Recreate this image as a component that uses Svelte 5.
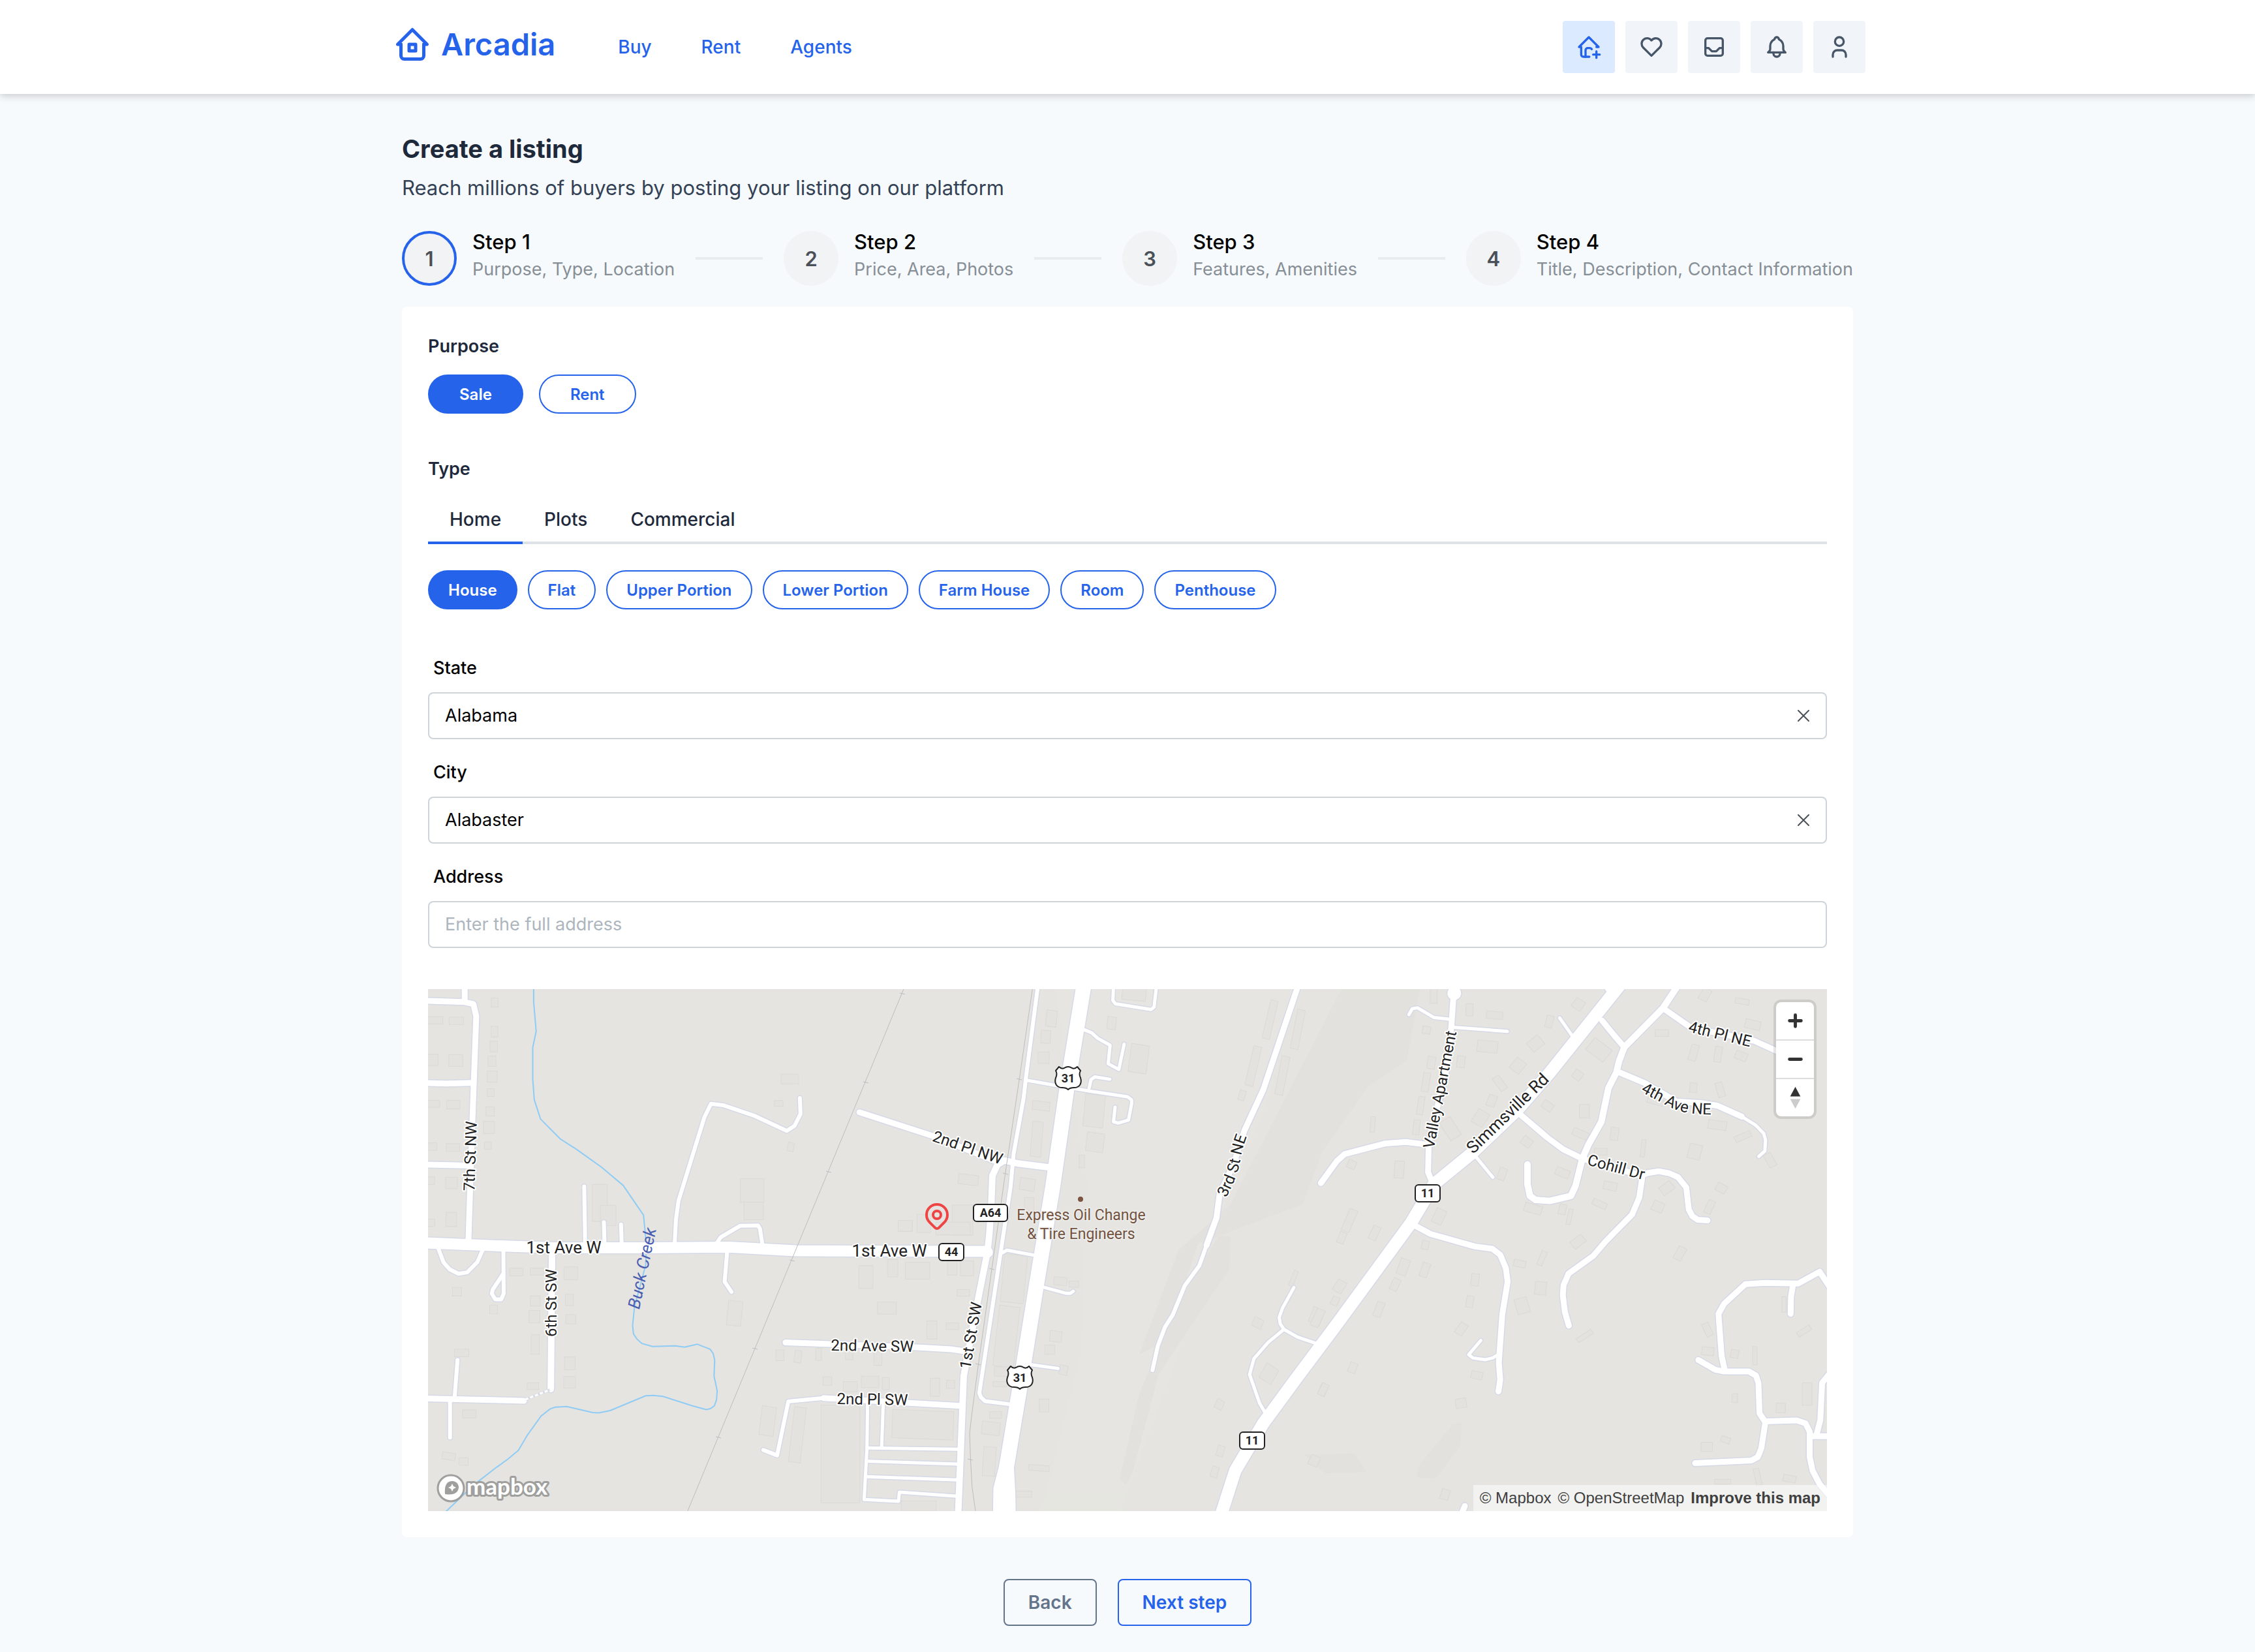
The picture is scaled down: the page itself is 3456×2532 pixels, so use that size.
<script lang="ts">
	const nav = ['Buy', 'Rent', 'Agents']

	const actions = [
		{
			label: 'Create listing',
			active: true,
			paths: [
				'M19 12h2l-9 -9l-9 9h2v7a2 2 0 0 0 2 2h5.5',
				'M16 19h6',
				'M19 16v6',
				'M9 21v-6a2 2 0 0 1 2 -2h2a2 2 0 0 1 1.700 1'
			]
		},
		{
			label: 'Favourites',
			paths: ['M19.500 12.572l-7.500 7.428l-7.500 -7.428a5 5 0 1 1 7.500 -6.566a5 5 0 1 1 7.500 6.572']
		},
		{
			label: 'Inbox',
			paths: [
				'M4 6a2 2 0 0 1 2 -2h12a2 2 0 0 1 2 2v12a2 2 0 0 1 -2 2h-12a2 2 0 0 1 -2 -2z',
				'M4 13h3l3 3h4l3 -3h3'
			]
		},
		{
			label: 'Notifications',
			paths: [
				'M10 5a2 2 0 1 1 4 0a7 7 0 0 1 4 6v3a4 4 0 0 0 2 3h-16a4 4 0 0 0 2 -3v-3a7 7 0 0 1 4 -6',
				'M9 17v1a3 3 0 0 0 6 0v-1'
			]
		},
		{
			label: 'Profile',
			paths: [
				'M8 7a4 4 0 1 0 8 0a4 4 0 0 0 -8 0',
				'M6 21v-2a4 4 0 0 1 4 -4h4a4 4 0 0 1 4 4v2'
			]
		}
	]

	const steps = [
		'Purpose, Type, Location',
		'Price, Area, Photos',
		'Features, Amenities',
		'Title, Description, Contact Information'
	]

	const purposes = ['Sale', 'Rent']
	const tabs = ['Home', 'Plots', 'Commercial']
	const types = ['House', 'Flat', 'Upper Portion', 'Lower Portion', 'Farm House', 'Room', 'Penthouse']

	let step = $state(1)
	let purpose = $state('Sale')
	let tab = $state('Home')
	let type = $state('House')
	let region = $state('Alabama')
	let city = $state('Alabaster')
	let address = $state('')

	// the map is cut in three tiles, each with its own grid
	const tiles = [
		{
			transform: 'translate(-6 -6) scale(.4783 .5166)',
			roads: [
				[9, 'M130 0V50 M0 46L130 50L158 56L167 92L154 420L142 760'],
				[9, 'M0 290L70 292L152 290 M0 532L148 535'],
				[10, 'M410 790L406 1198'],
				[9, 'M0 1226L320 1233'],
				[6, 'M98 1220L107 1112 M83 1233V1342'],
				[6, 'M45 780L62 822L82 843L110 856L138 852L170 822L188 785'],
				[6, 'M254 785L255 915L247 932H228L217 915L220 903L252 858'],
				[6, 'M513 597L516 765 M576 703L578 765 M631 710L633 765'],
				[6, 'M803 765L807 695L815 640L898 392L919 352L958 356L1060 388L1162 432L1187 417L1206 382L1204 335'],
				[6, 'M938 765L950 748L1012 714L1070 713L1076 722L1084 770 M971 790L963 880L985 910'],
				[6, 'M1087 1379L1131 1395L1167 1235L1280 1225'],
				[17, 'M-10 764L200 772L420 779H700L980 777L1190 788L1800 790']
			],
			buildings: [
				[215, 38, 22, 27], [0, 93, 60, 22], [80, 95, 46, 22], [214, 122, 22, 32], [211, 166, 24, 32],
				[0, 205, 45, 33], [79, 206, 45, 35], [205, 210, 25, 31], [202, 255, 32, 33], [202, 307, 23, 23],
				[0, 342, 50, 20], [72, 342, 43, 25], [198, 361, 27, 27], [190, 404, 36, 36], [193, 465, 22, 22],
				[0, 468, 41, 22], [71, 470, 43, 23], [0, 569, 34, 22], [69, 570, 38, 34], [0, 694, 34, 22],
				[70, 674, 34, 42], [1144, 264, 56, 29], [1122, 342, 28, 17], [1165, 467, 20, 26, 12],
				[1013, 574, 76, 70], [1025, 644, 62, 52], [1519, 698, 46, 33], [539, 591, 48, 110], [565, 653, 50, 60],
				[274, 840, 43, 22], [340, 840, 43, 20], [448, 836, 44, 38], [91, 897, 29, 25], [340, 922, 32, 30],
				[210, 949, 25, 26], [336, 965, 35, 37], [453, 917, 25, 34], [454, 977, 32, 28], [343, 1037, 26, 58],
				[97, 1080, 46, 22], [450, 1103, 34, 38], [447, 1161, 38, 34], [330, 1180, 37, 20], [123, 1260, 43, 24],
				[58, 1387, 42, 21, 8], [112, 1402, 29, 22], [972, 937, 46, 73, 6], [1393, 832, 45, 68],
				[1453, 940, 60, 36], [1485, 814, 33, 51], [1127, 1082, 26, 32], [1187, 1084, 22, 36, 8],
				[1255, 1077, 18, 36], [1350, 1085, 24, 26], [1441, 1088, 26, 40], [1278, 1162, 28, 25],
				[1343, 1176, 45, 30], [1401, 1160, 56, 34], [1468, 1164, 23, 36], [1078, 1250, 46, 86, 8],
				[1177, 1252, 38, 164, 7], [1272, 1246, 124, 290]
			]
		},
		{
			transform: 'translate(644 -6) scale(.4783 .5166)',
			roads: [
				[9, 'M-201 1060L210 1074L330 1080L372 1086'],
				[9, 'M-79 1225L170 1238L360 1248'],
				[5, 'M62 1240L60 1375L51 1526L161 1531L164 1504L350 1516 M112 1245L107 1372'],
				[5, 'M60 1373L350 1377 M58 1412L350 1421 M56 1458L350 1468'],
				[9, 'M36 377L280 450L480 525'],
				[10, 'M640 540L545 529L500 520L478 533L462 565L458 660L452 740L446 792L410 960L370 1160L352 1575'],
				[6, 'M608 0L570 270L562 335L530 500L520 600L420 1210L425 1222L438 1234L515 1243'],
				[5, 'M572 282L670 298L780 315L895 331L908 340V352L898 400L865 409L850 405L855 362'],
				[5, 'M772 305L778 280L790 272L838 279'],
				[5, 'M750 130L780 141L800 158L839 178L833 233L867 250L884 175'],
				[5, 'M850 0L848 45L856 55L970 72L980 65L988 0'],
				[5, 'M492 795L508 786L600 802 M622 895L697 914H712L721 908 M580 1125L672 1137'],
				[9, 'M1442 0L1330 310L1270 430L1235 530L1190 620L1180 690L1148 772'],
				[6, 'M1148 772L1125 832L1078 892L1040 978L1015 1014L992 1070L975 1142'],
				[5, 'M1428 897L1392 957L1381 985L1384 1004L1396 1021L1440 1044L1500 1063'],
				[5, 'M1396 1021L1345 1060L1300 1108L1286 1155L1318 1240L1338 1272'],
				[17, 'M445 792H446'],
				[23, 'M755 0L700 310L655 600L603 890L556 1160L507 1430L501 1580'],
				[23, 'M507 1430L489 1495L488 1580 M507 1430L511 1500L513 1580']
			],
			buildings: [
				[634, 75, 34, 48, 6], [618, 134, 30, 38, 4], [608, 198, 36, 34], [590, 345, 56, 26, 6],
				[587, 405, 34, 104, 5], [550, 573, 48, 36, 8], [565, 630, 30, 40], [353, 562, 64, 30, 6],
				[333, 652, 66, 90], [220, 680, 44, 54], [160, 698, 45, 32], [281, 703, 110, 38],
				[878, 5, 76, 40, 5], [830, 94, 28, 37, 6], [902, 176, 58, 84, 8], [756, 325, 64, 96, 6],
				[763, 438, 56, 56, 7], [740, 504, 17, 38], [183, 822, 78, 50], [318, 818, 30, 42], [359, 818, 43, 44],
				[494, 800, 74, 142, 6], [474, 952, 66, 180, 7], [349, 903, 40, 20], [252, 996, 32, 54], [314, 1002, 39, 20],
				[659, 866, 42, 24, 5], [708, 878, 31, 18], [646, 1026, 38, 32, 6], [630, 1068, 32, 27],
				[676, 1128, 27, 28, 12], [612, 1228, 31, 38], [468, 1132, 50, 28], [464, 1176, 44, 15],
				[453, 1265, 38, 20], [428, 1296, 58, 38, 6], [432, 1370, 40, 86, 4], [263, 1166, 30, 54],
				[315, 1172, 26, 24], [141, 1262, 196, 84, 2], [578, 1424, 66, 17, 4], [535, 1501, 53, 18],
				[170, 1530, 112, 30], [1340, 44, 24, 116, 14], [1285, 180, 26, 120, 14], [1428, 72, 25, 118, 12],
				[1378, 210, 26, 116, 12], [1252, 312, 20, 30, 18], [1482, 958, 38, 48, 24], [1296, 988, 32, 28, 24],
				[1326, 1128, 44, 50, 32], [1177, 1230, 25, 28, 26], [1182, 1366, 22, 32, 18], [1163, 1428, 22, 32, 18],
				[1510, 1182, 24, 36, 24], [1420, 846, 14, 48, 24]
			]
		},
		{
			transform: 'translate(1344 -6) scale(.5421 .5166)',
			roads: [
				[9, 'M422 0L414 120L400 250L350 465L348 555L358 580'],
				[20, 'M421 24H423'],
				[5, 'M410 101L365 96L318 67L303 70L294 87 M420 125L572 137'],
				[9, 'M45 587L90 522L112 501L225 470L285 465L345 473'],
				[5, 'M720 97L762 160 M480 505L531 570'],
				[10, 'M1055 0L1012 68L903 184L888 225L880 260L858 305L838 405L802 472L784 515L765 595L752 625L692 640L652 637L636 625L629 590V532'],
				[9, 'M840 105L875 150L903 184 M850 0L870 30'],
				[9, 'M1012 68L1090 125L1270 165L1340 198'],
				[9, 'M885 257L960 290L1050 345L1120 350L1165 357L1235 390'],
				[5, 'M1235 390L1275 416L1297 440L1302 460L1300 492L1283 508'],
				[9, 'M605 380L685 452L730 487L785 515L850 535L950 565L970 557L1000 552L1030 558L1055 570L1078 600L1085 665L1095 685L1110 696L1138 698'],
				[9, 'M955 560L945 630L925 680L850 760L815 803L745 856L731 890L729 920L735 970L746 1010'],
				[9, 'M300 707L355 738L480 775L530 782L552 800L568 840L573 880L558 975L548 1120L552 1170L547 1205'],
				[5, 'M497 1054L463 1096L475 1106L510 1111L530 1106L548 1095'],
				[9, 'M1485 898L1455 850L1395 885L1300 883L1245 887L1185 945L1169 975L1178 1100L1187 1143 M1380 887L1374 925L1373 975'],
				[9, 'M1112 1112L1160 1141L1185 1146H1255L1275 1158L1282 1180L1285 1270L1300 1294L1390 1291L1415 1300L1427 1325V1400L1435 1440L1455 1480L1495 1530'],
				[9, 'M1302 1294L1290 1375L1280 1400L1262 1410L1103 1418'],
				[9, 'M1430 1338H1490 M1446 1335L1457 1290L1462 1180L1485 1150 M452 1545L440 1575'],
				[19, 'M890 0L690 262L600 370L470 500L365 590L300 705L92 1003L-20 1160L-118 1300L-197 1440L-240 1580']
			],
			buildings: [
				[354, 8, 20, 46], [455, 55, 20, 36], [513, 78, 46, 22, 5], [332, 122, 23, 22, 10], [346, 212, 22, 36, 8],
				[430, 210, 22, 34, 6], [487, 165, 58, 34, 6], [332, 260, 20, 56, 8], [318, 330, 18, 54, 8],
				[306, 400, 18, 44, 6], [185, 390, 13, 46, 4], [253, 522, 27, 50, 4], [120, 520, 24, 24, 24],
				[393, 395, 36, 62, -32], [632, 156, 40, 34, -40], [585, 220, 34, 38, 38], [540, 268, 22, 46, -36],
				[516, 326, 24, 34, 20], [478, 372, 36, 44, 32], [758, 42, 30, 30, 36], [681, 90, 20, 36, 14],
				[800, 170, 62, 44, 38], [758, 254, 26, 26, 36], [776, 354, 28, 40], [756, 430, 46, 22, 24],
				[670, 346, 32, 24, 36], [612, 452, 30, 26, 38], [864, 422, 22, 38, 6], [818, 484, 36, 20],
				[708, 544, 40, 24, 22], [844, 584, 38, 24, 12], [620, 650, 50, 26, 16], [812, 640, 42, 18, 26],
				[742, 664, 12, 46, 12], [718, 650, 20, 30, 12], [546, 542, 22, 36, 20], [950, 458, 12, 52, 6],
				[990, 132, 38, 20], [1088, 176, 22, 48, 16], [1158, 182, 20, 46, 8], [1216, 198, 34, 24, 22],
				[1244, 104, 44, 26, 14], [1216, 40, 40, 16, 10], [1118, 10, 26, 36, 28], [1088, 290, 20, 28, 6],
				[1164, 288, 20, 44, -16], [968, 336, 46, 18, 16], [1140, 402, 52, 26, 8], [1214, 440, 48, 18, -24],
				[1084, 472, 36, 44, 14], [1304, 498, 22, 42, -28], [1004, 588, 38, 28, -38], [982, 642, 32, 30, 24],
				[1162, 590, 30, 24, 30], [1134, 638, 20, 40, 24], [752, 748, 40, 26, -38], [1048, 776, 24, 40, 28],
				[114, 664, 24, 68, 22], [94, 732, 20, 34, 22], [186, 714, 22, 42, 24], [364, 664, 30, 44, 24],
				[330, 758, 20, 26, 12], [264, 812, 28, 48, 20], [328, 824, 22, 42, 18], [244, 870, 22, 36, 24],
				[84, 876, 28, 36, 32], [198, 940, 22, 44, 20], [24, 960, 24, 54, 24], [75, 924, 20, 26, 24],
				[590, 816, 34, 20, 12], [662, 788, 16, 44, 22], [470, 856, 22, 36, 6], [650, 880, 32, 38, 6],
				[596, 928, 36, 46, -16], [456, 922, 20, 34, 8], [430, 1002, 24, 36, 34], [470, 1146, 32, 22, 12],
				[766, 1034, 50, 14, -34], [124, 1120, 22, 30, 20], [42, 1182, 20, 36, 26], [426, 1226, 30, 28, -8],
				[1128, 1002, 20, 40, -24], [1348, 924, 12, 46], [1390, 1018, 42, 16, -34], [1122, 1074, 34, 24, 6],
				[1204, 1082, 22, 24, 10], [1266, 1072, 12, 54], [1207, 1212, 16, 26], [1332, 1240, 26, 28],
				[1406, 1180, 27, 66], [1120, 1356, 32, 27], [1176, 1340, 26, 18, 20], [1158, 1466, 46, 14],
				[1272, 1434, 16, 50, -12], [1352, 1454, 36, 20, 10], [384, 1496, 24, 30, 18], [12, 1396, 28, 30, 24]
			]
		}
	]

	const railTicks = [
		[727, 7], [671, 143], [614, 280], [558, 416], [501, 551], [445, 687],
		[906, 138], [885, 283], [864, 429], [843, 575], [831, 721]
	]

	const labels = [
		{ text: '7th St NW', x: 65, y: 256, turn: -88 },
		{ text: '6th St SW', x: 189, y: 481, turn: -90 },
		{ text: '1st Ave W', x: 208, y: 397, turn: 0, big: true },
		{ text: '1st Ave W', x: 707, y: 402, turn: 0, big: true },
		{ text: '2nd Ave SW', x: 681, y: 547, turn: 1 },
		{ text: '2nd Pl SW', x: 681, y: 629, turn: 1 },
		{ text: '2nd Pl NW', x: 827, y: 243, turn: 19 },
		{ text: '1st St SW', x: 832, y: 531, turn: -80 },
		{ text: 'Valley Apartment', x: 1551, y: 154, turn: -79 },
		{ text: 'Simmsville Rd', x: 1655, y: 191, turn: -44, big: true },
		{ text: '4th Pl NE', x: 1980, y: 69, turn: 14 },
		{ text: 'Cohill Dr', x: 1821, y: 273, turn: 15 }
	]

	const shields = [
		{ text: 'A64', x: 862, y: 343, w: 52 },
		{ text: '44', x: 802, y: 403, w: 38 },
		{ text: '11', x: 1263, y: 692, w: 38 },
		{ text: '11', x: 1532, y: 313, w: 38 }
	]

	const highways = [[981, 136], [907, 595]]
</script>

<header>
	<div class="bar">
		<a class="logo" href="/">
			<svg viewBox="0 0 24 24" aria-hidden="true">
				<path d="M5 12H3l9-9 9 9h-2" />
				<path d="M5 12v7a2 2 0 0 0 2 2h10a2 2 0 0 0 2-2v-7" />
				<path d="M10 12h4v4h-4z" />
			</svg>
			<span>Arcadia</span>
		</a>
		<nav>
			{#each nav as item}
				<a href="/{item.toLowerCase()}">{item}</a>
			{/each}
		</nav>
		<div class="actions">
			{#each actions as action}
				<button type="button" class:active={action.active} aria-label={action.label}>
					<svg viewBox="0 0 24 24" aria-hidden="true">
						{#each action.paths as d}
							<path {d} />
						{/each}
					</svg>
				</button>
			{/each}
		</div>
	</div>
</header>

<main>
	<h1>Create a listing</h1>
	<p class="lead">Reach millions of buyers by posting your listing on our platform</p>

	<div class="stepper">
		{#each steps as text, i}
			{#if i > 0}
				<span class="line"></span>
			{/if}
			<button type="button" class="step" class:current={step == i + 1} onclick={() => (step = i + 1)}>
				<span class="number">{i + 1}</span>
				<span class="step-body">
					<span class="step-title">Step {i + 1}</span>
					<span class="step-text">{text}</span>
				</span>
			</button>
		{/each}
	</div>

	<form class="panel" onsubmit={(e) => e.preventDefault()}>
		<h2>Purpose</h2>
		<div class="pills wide">
			{#each purposes as item}
				<button type="button" class="pill" class:selected={item == purpose} onclick={() => (purpose = item)}>{item}</button>
			{/each}
		</div>

		<h2 class="type">Type</h2>
		<div class="tabs" role="tablist">
			{#each tabs as item}
				<button type="button" role="tab" aria-selected={item == tab} onclick={() => (tab = item)}>{item}</button>
			{/each}
		</div>
		<div class="pills">
			{#each types as item}
				<button type="button" class="pill" class:selected={item == type} onclick={() => (type = item)}>{item}</button>
			{/each}
		</div>

		<div class="fields">
			<div class="field">
				<label for="state">State</label>
				<div class="control">
					<input id="state" type="text" bind:value={region} />
					<button type="button" aria-label="Clear state" onclick={() => (region = '')}>
						<svg viewBox="0 0 20 20" aria-hidden="true"><path d="M2 2l16 16M18 2L2 18" /></svg>
					</button>
				</div>
			</div>
			<div class="field">
				<label for="city">City</label>
				<div class="control">
					<input id="city" type="text" bind:value={city} />
					<button type="button" aria-label="Clear city" onclick={() => (city = '')}>
						<svg viewBox="0 0 20 20" aria-hidden="true"><path d="M2 2l16 16M18 2L2 18" /></svg>
					</button>
				</div>
			</div>
			<div class="field">
				<label for="address">Address</label>
				<div class="control">
					<input id="address" type="text" placeholder="Enter the full address" bind:value={address} />
				</div>
			</div>
		</div>

		<div class="map">
			<svg class="canvas" viewBox="0 0 2144 800" role="img" aria-label="Map">
				<g class="relief">
					<path d="M960 0L1330 0L1290 160L1240 290L1180 420L1150 560L1060 800L940 800L1000 560L1010 300Z" class="light" />
					<path d="M1400 0L1520 0L1500 110L1440 150L1370 250L1340 330L1180 390L1130 540L1090 560L1150 400L1230 330Z" />
					<path d="M1212 378L1230 380L1228 430L1180 500L1120 590L1080 740L1070 760L1060 750L1090 620L1150 480Z" />
					<path d="M1570 668L1584 664L1582 700L1545 750L1515 748L1520 728Z" />
					<path d="M1344 714L1420 712L1438 740L1375 742Z" />
					<path d="M1398 70L1428 40L1420 110L1375 200L1344 245L1360 150Z" />
				</g>

				{#each tiles as tile}
					<g transform={tile.transform} class="buildings">
						{#each tile.buildings as [x, y, w, h, turn = 0]}
							<rect {x} {y} width={w} height={h} transform="rotate({turn} {x + w / 2} {y + h / 2})" />
						{/each}
					</g>
				{/each}

				<g transform={tiles[0].transform}>
					<path class="creek" d="M351 0V50L359 137L348 185V278L353 340L373 397L436 456L490 488L570 541L638 594L703 682L712 770L710 830L674 955L668 1010L671 1035L682 1050L698 1063L732 1072L805 1070L835 1074L875 1065L916 1080L926 1092L931 1112L929 1160L939 1203L937 1230L930 1248L918 1256L904 1259L860 1248L765 1220L735 1217L710 1218L596 1262L560 1269L540 1268L457 1250L420 1252L404 1257L375 1278L330 1336L302 1380L270 1405L228 1433L160 1482L66 1565" />
				</g>

				{#each ['casing', 'road'] as layer}
					{#each tiles as tile}
						<g transform={tile.transform} class={layer}>
							{#each tile.roads as [w, d]}
								<path {d} stroke-width={layer == 'casing' ? Number(w) + 3 : w} />
							{/each}
						</g>
					{/each}
				{/each}

				<path class="trail" d="M149 629L187 614" />
				<path class="trail dashes" d="M149 629L187 614" />

				<g transform={tiles[0].transform}>
					<path class="rail" d="M1544 -5L840 1570" />
				</g>
				<g transform={tiles[1].transform}>
					<path class="rail" d="M592 0L548 280L503 560L460 842L417 1125L395 1280L389 1330L392 1408L397 1490L410 1575" />
				</g>
				{#each railTicks as [x, y]}
					<path class="rail" d="M{x - 4} {y - 1}l8 2" />
				{/each}

				<defs>
					<path id="third-street" d="M1223 320Q1240 290 1245 262T1260 215" />
					<path id="fourth-avenue" d="M1858 157Q1888 173 1908 183T1975 192" />
				</defs>
				<g class="labels">
					{#each labels as label}
						<text
							x={label.x}
							y={label.y + 8}
							class:big={label.big}
							transform="rotate({label.turn} {label.x} {label.y})"
						>{label.text}</text>
					{/each}
					<text class="along"><textPath href="#third-street">3rd St NE</textPath></text>
					<text class="along"><textPath href="#fourth-avenue">4th Ave NE</textPath></text>
					<text class="water" x="329" y="436" transform="rotate(-78 329 428)">Buck Creek</text>
					<text class="place" x="1001" y="354">Express Oil Change</text>
					<text class="place" x="1001" y="383">&amp; Tire Engineers</text>
				</g>
				<circle cx="1000" cy="322" r="4" fill="#7a5440" />

				<g class="shields">
					{#each shields as shield}
						<rect x={shield.x - shield.w / 2} y={shield.y - 13} width={shield.w} height="26" rx="5" />
						<text x={shield.x} y={shield.y + 6}>{shield.text}</text>
					{/each}
					{#each highways as [x, y]}
						<g transform="translate({x} {y})">
							<path d="M-14 -17Q-10 -13 -6 -15Q-3 -17 0 -17Q3 -17 6 -15Q10 -13 14 -17L19 -11Q16 -6 19 0Q21 6 18 11Q15 15 9 15Q3 15 0 18Q-3 15 -9 15Q-15 15 -18 11Q-21 6 -19 0Q-16 -6 -19 -11Z" />
							<text y="7">31</text>
						</g>
					{/each}
				</g>

				<g class="pin" transform="translate(756 324) scale(2)">
					<circle cx="12" cy="11" r="3" />
					<path d="M17.657 16.657L13.414 20.900a2 2 0 0 1-2.827 0l-4.244-4.243a8 8 0 1 1 11.314 0z" />
				</g>

				<g class="mapbox">
					<circle cx="35" cy="765" r="20" />
					<path d="M26 774C25 761 28 754 38 754C44 755 47 759 47 764C46 773 38 776 26 774Z" />
					<path class="spark" d="M37 758l2 4 4 2-4 2-2 4-2-4-4-2 4-2z" />
					<text x="59" y="775">mapbox</text>
				</g>
			</svg>

			<div class="zoom">
				<button type="button" aria-label="Zoom in">
					<svg viewBox="0 0 58 58" aria-hidden="true"><path d="M29 20v18M20 29h18" /></svg>
				</button>
				<button type="button" aria-label="Zoom out">
					<svg viewBox="0 0 58 58" aria-hidden="true"><path d="M20 29h18" /></svg>
				</button>
				<button type="button" aria-label="Reset bearing to north">
					<svg viewBox="0 0 58 58" aria-hidden="true">
						<path class="north" d="M21 27l8-15 8 15z" />
						<path class="south" d="M21 31l8 15 8-15z" />
					</svg>
				</button>
			</div>

			<div class="attribution">
				<a href="/mapbox">© Mapbox</a>
				<a href="/osm">© OpenStreetMap</a>
				<a class="improve" href="/improve">Improve this map</a>
			</div>
		</div>
	</form>

	<div class="buttons">
		<button type="button" class="back" onclick={() => (step = Math.max(1, step - 1))}>Back</button>
		<button type="button" class="next" onclick={() => (step = Math.min(4, step + 1))}>Next step</button>
	</div>
</main>

<style>
	:global(body) {
		background: #f7fafd;
		font-family: Inter, "Noto Sans", sans-serif;
		color: #1e293b;
	}

	a {
		text-decoration: none;
	}

	button {
		font-family: inherit;
		cursor: pointer;
		padding: 0;
		border: 0;
		background: none;
	}

	header {
		background: #fff;
		padding: 32px;
		box-shadow: 0 2px 12px rgba(0, 0, 0, .22);
	}

	.bar {
		display: flex;
		align-items: center;
		max-width: 2262px;
		margin: 0 auto;
	}

	.logo {
		display: flex;
		align-items: center;
		gap: 14px;
		padding: 0 0 8px 5px;
		color: #2563eb;
		font-size: 47px;
		line-height: 60px;
		font-weight: 600;

		svg {
			width: 60px;
			height: 60px;
		}
	}

	.logo svg,
	.actions svg {
		fill: none;
		stroke: currentColor;
		stroke-width: 2;
		stroke-linecap: round;
		stroke-linejoin: round;
	}

	nav {
		display: flex;
		gap: 76px;
		margin-left: 96px;

		a {
			color: #2563eb;
			font-size: 28px;
			line-height: 40px;
			font-weight: 500;
		}
	}

	.actions {
		display: flex;
		gap: 16px;
		margin-left: auto;

		button {
			display: grid;
			place-items: center;
			width: 80px;
			height: 80px;
			border-radius: 4px;
			background: #f1f5f9;
			color: #475569;
		}

		button.active {
			background: #dbeafe;
			color: #2563eb;
		}

		svg {
			width: 40px;
			height: 40px;
		}
	}

	main {
		max-width: 2224px;
		margin: 0 auto;
		padding: 56px 32px 40px;
	}

	h1 {
		margin: 0;
		font-size: 38px;
		line-height: 56px;
		font-weight: 700;
	}

	.lead {
		margin: 8px 0 0;
		font-size: 31px;
		line-height: 48px;
		color: #334155;
	}

	.stepper {
		display: flex;
		align-items: center;
		gap: 32px;
		margin: 42px 0 32px;

		.line {
			flex: 1;
			height: 4px;
			background: #e9ecef;
		}
	}

	.step {
		display: flex;
		align-items: center;
		gap: 24px;
		text-align: left;
	}

	.number {
		display: grid;
		place-items: center;
		box-sizing: border-box;
		width: 84px;
		height: 84px;
		border-radius: 50%;
		border: 4px solid #f1f3f5;
		background: #f1f3f5;
		color: #495057;
		font-size: 31px;
		font-weight: 600;
	}

	.current .number {
		border-color: #2563eb;
	}

	.step-body {
		display: flex;
		flex-direction: column;
		gap: 12px;
		padding-bottom: 10px;
		white-space: nowrap;
	}

	.step-title {
		font-size: 31px;
		line-height: 32px;
		font-weight: 500;
		color: #000;
	}

	.step-text {
		font-size: 27px;
		line-height: 28px;
		color: #868e96;
	}

	.panel {
		background: #fff;
		border-radius: 8px;
		padding: 40px;
	}

	h2 {
		margin: 0 0 22px;
		font-size: 27px;
		line-height: 42px;
		font-weight: 600;
	}

	.type {
		margin-top: 64px;
	}

	.pills {
		display: flex;
		flex-wrap: wrap;
		gap: 16px;
	}

	.pill {
		height: 60px;
		padding: 0 29px;
		border: 2px solid #2563eb;
		border-radius: 30px;
		color: #2563eb;
		font-size: 24px;
		font-weight: 600;
	}

	.selected {
		background: #2563eb;
		color: #fff;
	}

	.wide {
		gap: 24px;

		.pill {
			padding: 0 46px;
		}
	}

	.tabs {
		display: flex;
		margin-bottom: 40px;
		box-shadow: inset 0 -4px #dee2e6;

		button {
			padding: 20px 33px;
			border-bottom: 4px solid transparent;
			color: #1e293b;
			font-size: 28px;
			line-height: 28px;
			font-weight: 500;
		}

		button[aria-selected="true"] {
			border-color: #2563eb;
		}
	}

	.fields {
		display: grid;
		gap: 28px;
		margin: 67px 0 63px;
	}

	.field label {
		display: block;
		margin: 0 8px 14px;
		font-size: 27px;
		line-height: 46px;
		font-weight: 500;
		color: #000;
	}

	.control {
		display: flex;
		align-items: center;
		box-sizing: border-box;
		height: 72px;
		padding: 0 24px;
		border: 2px solid #ced4da;
		border-radius: 8px;
		background: #fff;

		input {
			flex: 1;
			min-width: 0;
			padding: 0;
			border: 0;
			outline: 0;
			background: none;
			color: #000;
			font-family: inherit;
			font-size: 27px;
			line-height: 40px;
		}

		input::placeholder {
			color: #adb5bd;
			opacity: 1;
		}

		svg {
			display: block;
			width: 20px;
			height: 20px;
			stroke: #495057;
			stroke-width: 2;
			stroke-linecap: round;
		}
	}

	.map {
		position: relative;
		overflow: hidden;
		background: #e5e4e0;
	}

	.canvas {
		display: block;
		width: 100%;

		path {
			vector-effect: non-scaling-stroke;
		}
	}

	.relief {
		fill: #dfded9;
		opacity: .4;

		.light {
			fill: #e9e8e4;
		}
	}

	.buildings rect {
		fill: #e3e2de;
		stroke: #dbdad6;
		stroke-width: 2;
	}

	.creek {
		fill: none;
		stroke: #8ecbf5;
		stroke-width: 2;
	}

	.casing,
	.road {
		fill: none;
		stroke: #d6d9e6;
		stroke-linecap: round;
		stroke-linejoin: round;
	}

	.road {
		stroke: #fff;
	}

	.trail {
		stroke: #d6d9e6;
		stroke-width: 4;
	}

	.dashes {
		stroke: #fff;
		stroke-width: 3;
		stroke-dasharray: 5 3;
	}

	.rail {
		fill: none;
		stroke: #bdbdbd;
		stroke-width: 1;
	}

	.labels text {
		font-family: Roboto, sans-serif;
		font-size: 24px;
		text-anchor: middle;
		fill: #222;
		stroke: #fff;
		stroke-width: 4;
		stroke-linejoin: round;
		paint-order: stroke;
	}

	.labels .big {
		font-size: 26px;
	}

	.labels .along {
		text-anchor: start;
	}

	.labels .water {
		font-size: 26px;
		font-style: italic;
		fill: #4a5db0;
		stroke: none;
	}

	.labels .place {
		font-size: 23px;
		fill: #735240;
		stroke: #eeeeec;
		stroke-width: 3;
	}

	.shields {
		fill: #fff;
		stroke: #222;
		stroke-width: 2;
		stroke-linejoin: round;

		text {
			font-family: Roboto, sans-serif;
			font-size: 18px;
			font-weight: 700;
			text-anchor: middle;
			fill: #222;
			stroke: none;
		}
	}

	.pin {
		fill: none;
		stroke: #ef4444;
		stroke-width: 2;

		path {
			vector-effect: none;
		}
	}

	.mapbox {
		fill: #9f9f9e;

		circle {
			fill: #fff;
			stroke: #9f9f9e;
			stroke-width: 3;
		}

		.spark {
			fill: #fff;
		}

		text {
			font-family: Lato, sans-serif;
			font-size: 35px;
			font-weight: 700;
			fill: #fff;
			stroke: #9f9f9e;
			stroke-width: 6;
			stroke-linejoin: round;
			paint-order: stroke;
		}
	}

	.zoom {
		position: absolute;
		top: 20px;
		right: 20px;
		width: 58px;
		border-radius: 8px;
		background: #fff;
		box-shadow: 0 0 0 4px rgba(0, 0, 0, .1);

		button {
			display: block;
			width: 100%;
		}

		button + button {
			border-top: 2px solid #ddd;
		}

		svg {
			display: block;
			height: 57px;
			margin: 0 auto;
			stroke: #333;
			stroke-width: 5;
			stroke-linecap: round;
		}

		.north {
			fill: #333;
			stroke: none;
		}

		.south {
			fill: #ccc;
			stroke: none;
		}
	}

	.attribution {
		position: absolute;
		right: 0;
		bottom: 0;
		display: flex;
		gap: 10px;
		padding: 0 10px;
		background: rgba(255, 255, 255, .5);
		font-family: "Liberation Sans", Arial, sans-serif;
		font-size: 24px;
		line-height: 40px;

		a {
			color: #404040;
		}

		.improve {
			font-weight: 700;
		}
	}

	.buttons {
		display: flex;
		justify-content: center;
		gap: 32px;
		margin-top: 64px;

		button {
			height: 72px;
			padding: 0 36px;
			border: 2px solid;
			border-radius: 8px;
			font-size: 28px;
			font-weight: 600;
		}

		.back {
			color: #64748b;
		}

		.next {
			color: #2563eb;
		}
	}
</style>
